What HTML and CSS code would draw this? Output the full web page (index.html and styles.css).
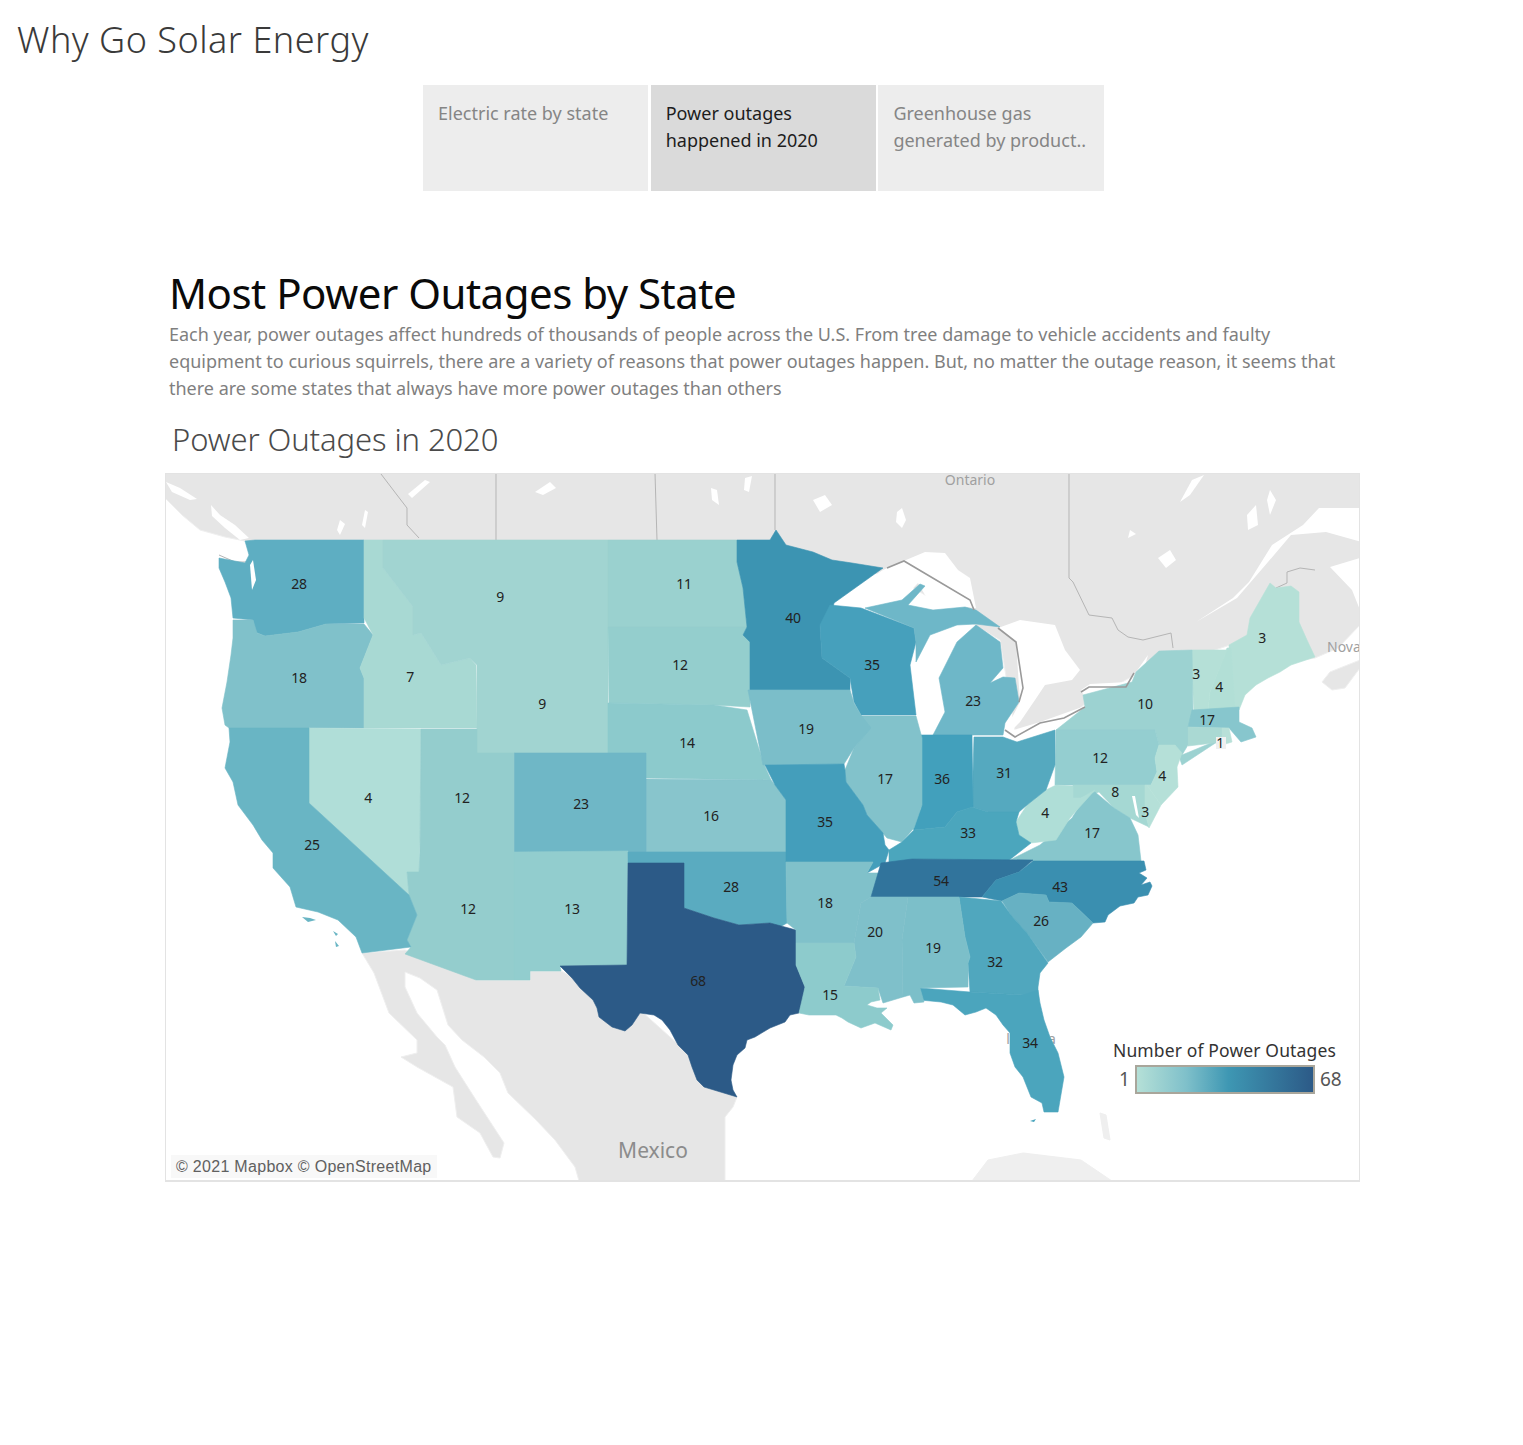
FILE: index.html
```html
<!DOCTYPE html>
<html lang="en">
<head>
<meta charset="utf-8">
<title>Why Go Solar Energy</title>
<link rel="stylesheet" href="styles.css">
</head>
<body>
<div class="page">
  <header class="site-title">Why Go Solar Energy</header>
  <nav class="tabs">
    <div class="tab">Electric rate by state</div>
    <div class="tab active">Power outages<br>happened in 2020</div>
    <div class="tab">Greenhouse gas<br>generated by product..</div>
  </nav>
  <main class="content">
    <h1 class="headline">Most Power Outages by State</h1>
    <p class="intro">Each year, power outages affect hundreds of thousands of people across the U.S. From tree damage to vehicle accidents and faulty<br>equipment to curious squirrels, there are a variety of reasons that power outages happen. But, no matter the outage reason, it seems that<br>there are some states that always have more power outages than others</p>
    <h2 class="map-title">Power Outages in 2020</h2>
    <section class="map">
      <svg class="map-svg" viewBox="165 473 1195 709" width="1195" height="709" aria-label="Map of power outages by US state">
        <!-- base land -->
        <polygon class="land" points="165,473 1360,473 1360,625 1338,648 1315,658 1290,662 1230,645 1185,660 1140,672 1090,700 1050,732 1015,730 1000,640 900,580 776,548 300,545 245,541 225,537 200,530 182,515 165,498"/>
        <polygon class="land" points="1330,672 1345,666 1360,660 1360,668 1345,688 1332,690 1322,682"/>
        <polygon class="land" points="362,953 405,950 476,980 530,980 530,971 561,971 640,1010 737,1097 733,1107 725,1117 725,1181 579,1181 575,1167 555,1140 536,1120 508,1093 500,1073 484,1057 462,1040 448,1025 437,990 420,978 405,972 405,987 417,1013 437,1037 445,1045 455,1067 476,1100 504,1143 500,1158 493,1157 480,1133 457,1117 453,1087 417,1067 401,1057 417,1053 417,1040 389,1013 374,973"/>
        <polygon class="land faint" points="972,1181 988,1160 1023,1153 1081,1160 1112,1181"/>
        <polygon class="land faint" points="1100,1113 1106,1115 1110,1140 1104,1138"/>
        <!-- water on land -->
        <g class="water">
          <polygon points="834,603 860,585 883,570 906,560 925,552 945,553 958,570 970,578 976,608 965,607 950,612 933,610 925,595 918,583 902,600 865,608"/>
          <polygon points="998,628 1020,620 1055,625 1065,650 1080,670 1072,680 1045,685 1035,700 1020,722 1007,735 1003,735 1020,702 1016,642"/>
          <polygon points="1007,732 1040,722 1085,706 1085,712 1054,730 1019,744"/>
          <polygon points="1081,690 1090,684 1128,682 1136,672 1148,655 1140,684 1110,692 1084,696"/>
          <polygon points="1196,622 1237,598 1268,562 1291,535 1326,532 1362,542 1362,508 1319,508 1303,525 1272,545 1249,582 1233,598"/>
          <polygon points="1330,567 1360,558 1360,610 1352,590"/>
          <polygon points="211,505 220,515 235,525 249,538 240,540 225,528 212,516"/>
          <polygon points="166,482 180,488 197,499 190,500 172,492"/>
          <polygon points="711,488 717,490 719,505 712,500"/>
          <polygon points="745,478 752,476 749,492 744,490"/>
          <polygon points="1180,502 1192,480 1204,475 1190,495"/>
          <polygon points="897,512 902,508 906,520 902,528 896,522"/>
          <polygon points="1158,558 1170,550 1176,560 1166,568"/>
          <polygon points="1247,515 1256,505 1258,525 1248,530"/>
          <polygon points="813,500 825,495 832,505 820,512"/>
          <polygon points="535,492 550,482 556,488 543,495"/>
          <polygon points="425,480 430,482 412,498 408,494"/>
          <polygon points="340,520 345,524 340,535 337,530"/>
          <polygon points="1270,490 1276,500 1270,515 1267,500"/>
          <polygon points="1130,530 1136,534 1128,538"/>
          <polygon points="365,510 368,512 365,528 362,525"/>
          <polygon points="720,585 725,584 724,590"/>
        </g>
        <g class="borders">
          <polyline points="496,473 496,540"/>
          <polyline points="655,473 657,540"/>
          <polyline points="775,473 775,530"/>
          <polyline points="381,474 397,495 407,508 407,525 419,538"/>
          <polyline points="1069,473 1069,578 1073,582 1089,615 1112,618 1118,630 1128,637 1143,640 1171,633 1173,648"/>
          <polyline points="1276,588 1287,583 1287,572 1300,568 1315,570"/>
          <polyline points="219,555 235,562 249,562 250,556"/>
        </g>
        <text class="place" x="970" y="485">Ontario</text>
        <text class="place place-start" x="1327" y="652">Nova</text>
        <text class="place mexico" x="653" y="1158">Mexico</text>
        <text class="place" x="1008" y="1044">l</text>
        <text class="place" x="1052" y="1044">a</text>
        <!-- states -->
        <g class="states">
          <polygon fill="#5eaec2" stroke="#5eaec2" points="255,540 364,540 364,623 326,624 298,632 265,636 255,632 253,620 233,618 231,598 225,582 219,568 219,558 245,563 249,555 245,541"/>
          <polygon fill="#80c1ca" stroke="#80c1ca" points="233,620 253,620 257,633 265,636 298,632 326,624 364,624 373,635 360,668 364,678 364,728 229,728 225,725 222,708 227,682 231,655 233,638"/>
          <polygon fill="#a8d9d3" stroke="#a8d9d3" points="364,540 383,540 383,568 413,607 413,635 421,633 441,665 470,658 476,665 477,728 364,728 364,678 360,668 373,635 364,618"/>
          <polygon fill="#a1d4d1" stroke="#a1d4d1" points="383,540 608,540 608,660 608,753 477,753 477,665 470,658 441,665 421,633 413,635 413,607 383,568"/>
          <polygon fill="#9ad1cf" stroke="#9ad1cf" points="608,540 737,540 737,562 743,588 747,627 608,627"/>
          <polygon fill="#94cecd" stroke="#94cecd" points="608,627 747,627 743,635 750,642 750,707 714,705 609,703"/>
          <polygon fill="#8ccacc" stroke="#8ccacc" points="608,703 714,705 747,710 763,762 771,780 646,778 646,753 608,753"/>
          <polygon fill="#88c5cc" stroke="#88c5cc" points="646,779 771,780 775,785 786,800 786,852 646,852"/>
          <polygon fill="#6fb7c6" stroke="#6fb7c6" points="514,753 646,753 646,852 514,852"/>
          <polygon fill="#b0ded8" stroke="#b0ded8" points="309,728 421,729 420,840 419,872 407,872 409,895 309,803"/>
          <polygon fill="#94cdcd" stroke="#94cdcd" points="421,729 477,729 477,753 514,753 514,852 420,852"/>
          <polygon fill="#94cdcd" stroke="#94cdcd" points="420,852 514,852 514,980 476,980 405,954 411,947 407,940 417,915 409,895 407,872 419,872"/>
          <polygon fill="#92cdce" stroke="#92cdce" points="514,852 628,851 627,965 560,966 561,971 530,971 530,980 514,980"/>
          <polygon fill="#69b5c4" stroke="#69b5c4" points="229,728 309,728 309,803 409,895 417,915 407,940 411,947 362,953 356,937 338,920 318,912 296,907 290,887 273,868 273,853 262,840 253,825 238,805 233,782 225,768 230,742"/>
          <polygon fill="#69b5c4" points="302,917 310,918 316,920 308,922"/>
          <polygon fill="#69b5c4" points="333,931 338,934 336,936"/>
          <polygon fill="#69b5c4" points="335,941 339,946 336,947"/>
          <polygon fill="#5aabc0" stroke="#5aabc0" points="628,852 786,852 787,923 780,927 770,923 739,925 714,918 684,908 684,863 628,863"/>
          <polygon fill="#2c5a87" stroke="#2c5a87" points="628,863 684,863 684,908 714,918 739,925 770,923 796,930 796,965 805,987 803,1000 799,1013 790,1015 785,1022 770,1028 755,1037 747,1040 745,1048 737,1055 733,1065 731,1080 733,1090 737,1097 704,1087 697,1080 692,1067 688,1055 678,1045 670,1030 662,1020 654,1015 640,1013 632,1025 625,1031 612,1027 599,1017 597,1008 593,1000 580,988 572,978 560,966 627,965"/>
          <polygon fill="#3c94b2" stroke="#3c94b2" points="737,540 770,540 776,530 786,545 813,552 832,560 852,563 883,568 834,603 830,622 820,625 822,658 850,678 850,690 770,690 750,690 750,642 743,635 747,627 743,588 737,562"/>
          <polygon fill="#46a0bc" stroke="#46a0bc" points="830,605 861,608 914,628 916,642 910,665 916,715 861,715 854,702 850,678 822,658 820,625"/>
          <polygon fill="#6eb7c8" stroke="#6eb7c8" points="865,608 902,600 920,584 925,586 908,605 933,610 965,607 976,610 1000,627 976,624 957,625 930,635 916,662 916,642 914,628"/>
          <polygon fill="#6eb7c8" stroke="#6eb7c8" points="976,625 1000,642 1003,668 990,683 1003,677 1015,678 1019,702 1005,723 1003,735 933,735 945,712 939,678 957,642"/>
          <polygon fill="#b5e0d7" stroke="#b5e0d7" points="1270,583 1276,588 1291,586 1299,592 1299,622 1307,640 1315,657 1291,665 1280,672 1268,678 1256,685 1245,695 1239,710 1230,710 1229,645 1247,635 1250,618"/>
          <polygon fill="#b2dfd6" stroke="#b2dfd6" points="1227,648 1231,648 1235,710 1208,710 1210,692"/>
          <polygon fill="#b5e0d7" stroke="#b5e0d7" points="1192,650 1227,650 1210,692 1208,710 1194,710 1192,678"/>
          <polygon fill="#9cd2d1" stroke="#9cd2d1" points="1159,651 1192,650 1193,710 1188,727 1188,745 1182,755 1223,738 1182,765 1175,745 1159,745 1155,730 1056,730 1085,707 1083,695 1132,682 1136,672"/>
          <polygon fill="#87c6cd" stroke="#87c6cd" points="1192,710 1239,707 1239,722 1252,728 1256,737 1241,742 1229,728 1188,727"/>
          <polygon fill="#aad9d3" stroke="#aad9d3" points="1188,727 1222,728 1222,742 1188,746"/>
          <polygon fill="#b8e0d8" stroke="#b8e0d8" points="1222,728 1229,728 1232,742 1222,745"/>
          <polygon fill="#94ced0" stroke="#94ced0" points="1056,730 1155,730 1159,745 1155,758 1157,772 1151,785 1055,785"/>
          <polygon fill="#b5e0d8" stroke="#b5e0d8" points="1159,745 1175,745 1182,753 1177,767 1178,787 1161,805 1147,785 1151,785 1157,772 1155,758"/>
          <polygon fill="#a5d8d3" stroke="#a5d8d3" points="1073,785 1145,785 1145,812 1149,827 1130,818 1114,808 1099,792 1081,798 1073,798"/>
          <polygon fill="#b5e0d8" stroke="#b5e0d8" points="1145,785 1147,785 1161,805 1149,828 1145,812"/>
          <polygon fill="#87c6cc" stroke="#87c6cc" points="1095,792 1114,808 1130,818 1138,835 1141,861 1008,861 1040,845 1072,818 1085,797"/>
          <polygon fill="#afded7" stroke="#afded7" points="1016,822 1027,805 1046,790 1056,785 1073,786 1073,798 1081,798 1095,790 1077,810 1070,818 1056,840 1031,843 1019,835"/>
          <polygon fill="#55a9bf" stroke="#55a9bf" points="974,737 1003,737 1017,742 1055,730 1055,765 1046,790 1027,805 1019,812 988,812 972,807"/>
          <polygon fill="#42a0bc" stroke="#42a0bc" points="921,735 972,735 973,807 957,812 945,827 914,830 912,827 921,808"/>
          <polygon fill="#82c2cb" stroke="#82c2cb" points="861,716 916,716 922,738 922,805 914,828 902,842 887,838 867,815 863,805 846,782 845,770 854,748 870,728"/>
          <polygon fill="#7bbec9" stroke="#7bbec9" points="748,690 850,690 854,703 861,715 871,728 854,748 844,764 763,765"/>
          <polygon fill="#449ebb" stroke="#449ebb" points="765,765 844,764 845,770 846,782 863,805 867,815 883,833 885,845 889,850 885,863 867,873 873,862 786,862 786,800 775,785"/>
          <polygon fill="#4ba6bd" stroke="#4ba6bd" points="914,830 945,827 957,812 972,807 988,812 1019,812 1016,822 1019,835 1031,843 1008,861 912,859 910,863 889,863 889,850 902,842"/>
          <polygon fill="#80c1ca" stroke="#80c1ca" points="786,862 873,862 867,873 881,873 871,897 861,903 854,943 796,943 796,930 787,923"/>
          <polygon fill="#31749c" stroke="#31749c" points="881,863 912,859 1033,860 1019,872 996,880 982,897 871,897"/>
          <polygon fill="#3a8fb0" stroke="#3a8fb0" points="1033,861 1144,861 1146,870 1139,873 1147,878 1141,885 1150,882 1152,886 1148,895 1138,897 1134,903 1120,906 1108,915 1105,922 1093,923 1072,903 1049,902 1046,895 1019,893 1002,901 982,897 996,880 1019,872"/>
          <polygon fill="#67b1c3" stroke="#67b1c3" points="1019,893 1046,895 1049,902 1072,903 1093,923 1081,937 1066,948 1048,962 1027,933 1011,915 1002,901"/>
          <polygon fill="#50a7be" stroke="#50a7be" points="959,897 1001,901 1011,915 1027,933 1048,963 1040,973 1038,987 1038,997 1023,995 970,992 968,963 970,957 965,937"/>
          <polygon fill="#4ba5bd" stroke="#4ba5bd" points="920,988 970,992 1023,995 1038,990 1040,1003 1044,1020 1050,1037 1058,1053 1064,1077 1058,1112 1044,1112 1042,1103 1031,1097 1023,1077 1015,1067 1010,1053 1010,1033 1003,1025 996,1015 986,1008 976,1012 965,1015 953,1005 941,1002 920,1000"/>
          <polygon fill="#4ba5bd" points="1030,1121 1036,1119 1034,1122"/>
          <polygon fill="#7cbfc9" stroke="#7cbfc9" points="908,897 959,897 965,937 970,957 968,963 968,987 920,988 924,1002 914,1003 910,995 903,997 902,940"/>
          <polygon fill="#7fc0ca" stroke="#7fc0ca" points="871,897 908,897 902,940 903,997 883,1003 878,988 844,986 856,957 854,943 861,903"/>
          <polygon fill="#8dcbcc" stroke="#8dcbcc" points="796,943 854,943 856,957 844,986 878,988 880,1000 871,1002 867,1005 877,1008 887,1008 881,1013 893,1025 891,1030 875,1023 861,1028 848,1022 842,1018 836,1015 809,1015 799,1013 805,987 796,965"/>
        </g>
        <g class="water">
          <polygon points="1132,796 1135,796 1139,818 1136,815"/>
          <polygon points="250,565 253,560 256,580 252,590"/>
        </g>
        <g class="borders strong">
          <polyline points="887,568 904,561 970,600 974,610"/>
          <polyline points="998,628 1016,642 1023,688 1019,702"/>
          <polyline points="1005,730 1015,737 1040,723 1064,718 1085,707"/>
          <polyline points="1081,692 1089,687 1126,687 1134,673"/>
        </g>
        <rect class="ri-tag" x="1216" y="737" width="10" height="12"/>
        <g class="labels">
          <text x="299" y="589">28</text><text x="299" y="683">18</text><text x="410" y="682">7</text>
          <text x="500" y="602">9</text><text x="542" y="709">9</text><text x="684" y="589">11</text>
          <text x="680" y="670">12</text><text x="687" y="748">14</text><text x="711" y="821">16</text>
          <text x="368" y="803">4</text><text x="462" y="803">12</text><text x="581" y="809">23</text>
          <text x="312" y="850">25</text><text x="468" y="914">12</text><text x="572" y="914">13</text>
          <text x="731" y="892">28</text><text x="698" y="986">68</text><text x="793" y="623">40</text>
          <text x="872" y="670">35</text><text x="973" y="706">23</text><text x="806" y="734">19</text>
          <text x="885" y="784">17</text><text x="942" y="784">36</text><text x="1004" y="778">31</text>
          <text x="825" y="827">35</text><text x="968" y="838">33</text><text x="1045" y="818">4</text>
          <text x="1092" y="838">17</text><text x="1100" y="763">12</text><text x="1145" y="709">10</text>
          <text x="1196" y="679">3</text><text x="1219" y="692">4</text><text x="1262" y="643">3</text>
          <text x="1207" y="725">17</text><text x="1220" y="748">1</text><text x="1162" y="781">4</text>
          <text x="1115" y="797">8</text><text x="1145" y="817">3</text><text x="941" y="886">54</text>
          <text x="1060" y="892">43</text><text x="825" y="908">18</text><text x="875" y="937">20</text>
          <text x="933" y="953">19</text><text x="1041" y="926">26</text><text x="995" y="967">32</text>
          <text x="830" y="1000">15</text><text x="1030" y="1048">34</text>
        </g>
      </svg>
      <div class="attribution">© 2021 Mapbox © OpenStreetMap</div>
      <div class="legend">
        <div class="legend-title">Number of Power Outages</div>
        <div class="legend-scale">
          <span class="legend-num">1</span>
          <span class="legend-bar"></span>
          <span class="legend-num">68</span>
        </div>
      </div>
    </section>
  </main>
</div>
</body>
</html>
```
FILE: styles.css
```css
* { box-sizing: border-box; }
html, body { margin: 0; background: #fff; }
body {
  font-family: "Noto Sans", "Lato", sans-serif;
  min-height: 1445px;
}
.page { display: flex; flex-direction: column; }
.site-title {
  padding: 16px 0 0 17px;
  height: 85px;
  font-size: 36px;
  line-height: 47px;
  font-weight: 300;
  letter-spacing: .5px;
  color: #3a3a3a;
}
.tabs { display: flex; gap: 2.3px; margin-left: 423px; }
.tab {
  width: 225.4px;
  height: 106px;
  padding: 15px 0 0 15px;
  background: #ededed;
  color: #858585;
  font-size: 18px;
  line-height: 27px;
  white-space: nowrap;
}
.tab.active { background: #dadada; color: #1d1d1d; }
.content { margin: 0 0 0 165px; width: 1195px; padding-top: 74px; }
.headline {
  margin: 0 0 0 4px;
  font-size: 42px;
  line-height: 56px;
  font-weight: 400;
  letter-spacing: -.5px;
  color: #0a0a0a;
}
.intro {
  margin: 0 0 0 4px;
  font-size: 18px;
  line-height: 27px;
  color: #7f7f7f;
  white-space: nowrap;
}
.map-title {
  margin: 16px 0 0 7px;
  height: 43px;
  font-size: 31px;
  line-height: 43px;
  font-weight: 300;
  letter-spacing: -.1px;
  color: #4a4a4a;
}
.map {
  position: relative;
  width: 1195px;
  height: 709px;
  margin-top: 12px;
  overflow: hidden;
  border: 1px solid #e3e3e3;
  border-bottom-width: 2px;
  background: #fff;
}
.map-svg { display: block; position: absolute; left: -1px; top: -1px; }
.land { fill: #e6e6e6; stroke: #efefef; stroke-width: 1; }
.land.faint { fill: #efefef; }
.water polygon { fill: #fff; }
.borders polyline { fill: none; stroke: #b5b5b5; stroke-width: 1; }
.borders.strong polyline { stroke: #9a9a9a; stroke-width: 1.6; }
.states polygon { stroke-width: .6; stroke-linejoin: round; }
.place {
  font-family: "Noto Sans", sans-serif;
  font-size: 14px;
  fill: #a0a0a0;
  text-anchor: middle;
}
.place.place-start { text-anchor: start; }
.place.mexico { font-size: 21px; fill: #8c8c8c; }
.ri-tag { fill: #f0f0f0; }
.labels text {
  font-family: "Noto Sans", sans-serif;
  font-size: 14px;
  letter-spacing: -.3px;
  fill: #222;
  text-anchor: middle;
}
.attribution {
  position: absolute;
  left: 5px;
  top: 681px;
  padding: 0 5px;
  height: 23px;
  background: rgba(245,245,245,.7);
  font-family: "Liberation Sans", sans-serif;
  font-size: 16px;
  line-height: 23px;
  letter-spacing: .3px;
  color: #606060;
}
.legend {
  position: absolute;
  left: 947px;
  top: 564px;
  width: 235px;
}
.legend-title {
  font-size: 17.5px;
  line-height: 24px;
  letter-spacing: .13px;
  color: #333;
  white-space: nowrap;
}
.legend-scale { display: flex; align-items: center; gap: 5px; margin-top: 3px; margin-left: 6px; }
.legend-num { font-size: 19px; line-height: 29px; color: #555; }
.legend-bar {
  width: 180px;
  height: 29px;
  border: 2px solid #a9a69b;
  background: linear-gradient(to right, #b5e0d7 0%, #7fc0ca 28%, #3e97b3 52%, #2c5a87 100%);
}
```
